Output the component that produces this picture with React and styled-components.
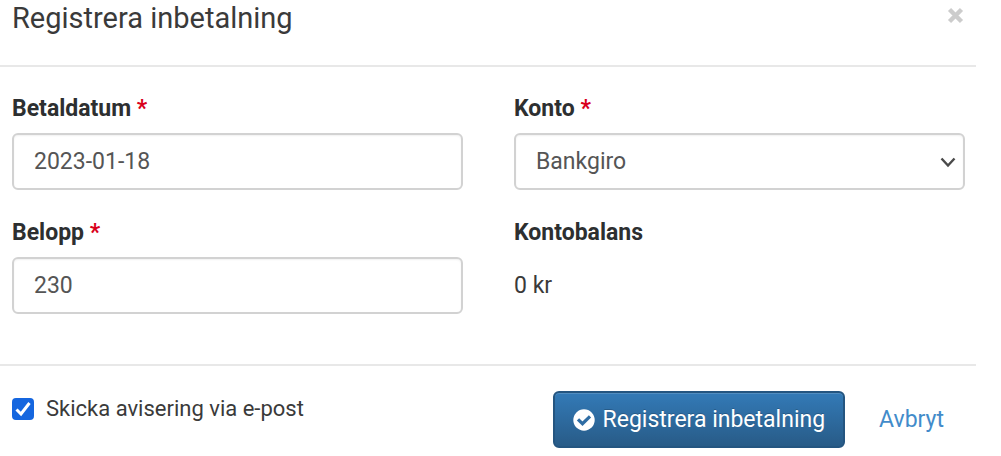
import React, { useState } from "react";
import styled, { createGlobalStyle } from "styled-components";

const GlobalStyle = createGlobalStyle`
  * {
    box-sizing: border-box;
  }
  body {
    margin: 0;
    background: #fff;
    color: #3a3a3a;
    font-family: Roboto, "Liberation Sans", sans-serif;
    font-size: 23px;
    line-height: 32px;
  }
  button,
  input,
  select {
    font: inherit;
  }
`;

const Dialog = styled.form`
  margin-right: 25px;
`;

const Header = styled.header`
  display: flex;
  justify-content: space-between;
  align-items: flex-start;
  padding: 0 12px 28px;
  border-bottom: 2px solid #e8e8e8;
`;

const Title = styled.h1`
  margin: 0;
  font-size: 29px;
  font-weight: 400;
  line-height: 37px;
`;

const CloseButton = styled.button`
  display: flex;
  padding: 7px 0;
  border: 0;
  background: none;
  color: #ccc;
  cursor: pointer;
`;

const Fields = styled.div`
  display: grid;
  grid-template-columns: 1fr 1fr;
  gap: 27px 51px;
  padding: 26px 11px 50px 12px;
`;

const Field = styled.div`
  display: flex;
  flex-direction: column;
  gap: 8px;
`;

const Label = styled.label`
  font-weight: 700;
  color: #2d2f30;
`;

const Required = styled.span`
  color: #d9001b;
`;

const Input = styled.input`
  width: 100%;
  height: 57px;
  padding: 0 20px;
  border: 2px solid #d2d2d2;
  border-radius: 6px;
  background: #fff;
  box-shadow: inset 0 1px 2px rgba(0, 0, 0, 0.06);
  color: #555;
`;

const SelectWrap = styled.div`
  display: grid;
  align-items: center;

  select,
  svg {
    grid-area: 1 / 1;
  }

  svg {
    justify-self: end;
    margin-right: 9px;
    pointer-events: none;
  }
`;

const Select = styled(Input).attrs({ as: "select" })`
  appearance: none;
`;

const Balance = styled.output`
  line-height: 57px;
`;

const Footer = styled.footer`
  display: flex;
  justify-content: space-between;
  align-items: flex-start;
  padding: 25px 10px 8px 12px;
  border-top: 2px solid #e8e8e8;
`;

const CheckLabel = styled.label`
  display: flex;
  align-items: center;
  gap: 12px;
  padding-top: 2px;
  font-size: 22px;
`;

const Check = styled.span`
  display: grid;
  width: 22px;
  height: 22px;

  input,
  svg {
    grid-area: 1 / 1;
  }

  input {
    appearance: none;
    width: 22px;
    height: 22px;
    margin: 0;
    border: 2px solid #767676;
    border-radius: 4px;
  }

  input:checked {
    border-color: #1566df;
    background: #1566df;
  }

  svg {
    pointer-events: none;
  }

  input:not(:checked) + svg {
    visibility: hidden;
  }
`;

const Actions = styled.div`
  display: flex;
`;

const Button = styled.button`
  display: flex;
  align-items: center;
  gap: 8px;
  height: 57px;
  padding: 0 20px;
  border: 2px solid transparent;
  border-radius: 6px;
  background: none;
  color: #428bca;
  cursor: pointer;
`;

const PrimaryButton = styled(Button)`
  margin-right: 12px;
  padding: 0 18px;
  border-color: #245580;
  background: linear-gradient(#337ab7, #285b87);
  box-shadow: inset 0 1px 0 rgba(255, 255, 255, 0.15);
  color: #fff;
  text-shadow: 0 -1px 0 rgba(0, 0, 0, 0.2);
`;

function CloseIcon() {
  return (
    <svg width="17" height="17" viewBox="0 0 17 17" aria-hidden="true">
      <path d="M2.5 2.5l12 12M14.5 2.5l-12 12" stroke="currentColor" strokeWidth="4.4" />
    </svg>
  );
}

function ChevronIcon() {
  return (
    <svg width="16" height="12" viewBox="0 0 16 12" fill="none" aria-hidden="true">
      <path d="M1.5 2.5l6.5 7 6.5-7" stroke="#4a4a4a" strokeWidth="2.4" />
    </svg>
  );
}

function CheckCircleIcon() {
  return (
    <svg width="22" height="22" viewBox="0 0 22 22" fill="none" aria-hidden="true">
      <circle cx="11" cy="11" r="10.7" fill="#fff" />
      <path d="M5 10.3l4.5 4.4 7.5-7.4" stroke="#2f6da4" strokeWidth="3.2" />
    </svg>
  );
}

export default function App() {
  const [values, setValues] = useState({
    date: "2023-01-18",
    account: "Bankgiro",
    amount: "230",
    notify: true,
  });

  const handleChange = (e) => {
    const { name, type, checked, value } = e.target;
    setValues((prev) => ({
      ...prev,
      [name]: type === "checkbox" ? checked : value,
    }));
  };

  return (
    <>
      <GlobalStyle />
      <Dialog onSubmit={(e) => e.preventDefault()}>
        <Header>
          <Title>Registrera inbetalning</Title>
          <CloseButton type="button" aria-label="Stäng">
            <CloseIcon />
          </CloseButton>
        </Header>
        <Fields>
          <Field>
            <Label htmlFor="date">
              Betaldatum <Required>*</Required>
            </Label>
            <Input id="date" name="date" value={values.date} onChange={handleChange} />
          </Field>
          <Field>
            <Label htmlFor="account">
              Konto <Required>*</Required>
            </Label>
            <SelectWrap>
              <Select id="account" name="account" value={values.account} onChange={handleChange}>
                <option>Bankgiro</option>
              </Select>
              <ChevronIcon />
            </SelectWrap>
          </Field>
          <Field>
            <Label htmlFor="amount">
              Belopp <Required>*</Required>
            </Label>
            <Input id="amount" name="amount" value={values.amount} onChange={handleChange} />
          </Field>
          <Field>
            <Label htmlFor="balance">Kontobalans</Label>
            <Balance id="balance">0 kr</Balance>
          </Field>
        </Fields>
        <Footer>
          <CheckLabel>
            <Check>
              <input type="checkbox" name="notify" checked={values.notify} onChange={handleChange} />
              <svg width="22" height="22" viewBox="0 0 22 22" fill="none" aria-hidden="true">
                <path d="M4.5 11.5l4.5 4.5 8.5-11" stroke="#fff" strokeWidth="3" />
              </svg>
            </Check>
            Skicka avisering via e-post
          </CheckLabel>
          <Actions>
            <PrimaryButton type="submit">
              <CheckCircleIcon />
              Registrera inbetalning
            </PrimaryButton>
            <Button type="button">Avbryt</Button>
          </Actions>
        </Footer>
      </Dialog>
    </>
  );
}
